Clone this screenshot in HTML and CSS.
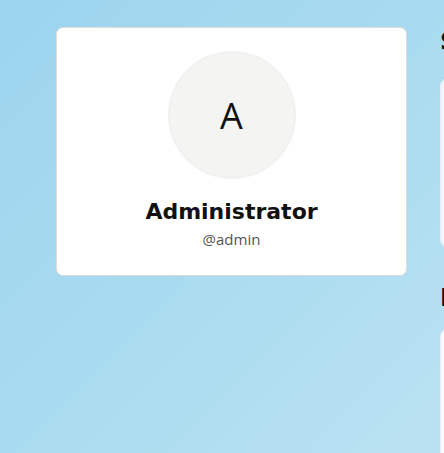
FILE: index.html
```html
<!DOCTYPE html>
<html lang="en">
<head>
<meta charset="utf-8">
<title>Profile</title>
<link rel="stylesheet" href="styles.css">
</head>
<body>
<div class="page">
  <section class="profile">
    <div class="avatar"><span>A</span></div>
    <h1 class="name">Administrator</h1>
    <div class="handle">@admin</div>
  </section>
  <aside class="side">
    <h2 class="side-title">Statistics</h2>
    <div class="side-card stats"></div>
    <h2 class="side-title second">Informations</h2>
    <div class="side-card info"></div>
  </aside>
</div>
</body>
</html>
```

FILE: styles.css
```css
html, body {
  margin: 0;
  height: 100%;
}
body {
  background: linear-gradient(135deg, #9cd4ee 0%, #a9dbf0 50%, #bbe2f2 100%);
  font-family: "Open Sans", "Liberation Sans", sans-serif;
  overflow: hidden;
}
.page {
  display: flex;
  align-items: flex-start;
  gap: 33px;
  padding: 27px 0 0 56px;
}
.profile {
  flex: 0 0 351px;
  box-sizing: border-box;
  height: 249px;
  background: #ffffff;
  border: 1px solid #dcdcdc;
  border-radius: 7px;
  display: flex;
  flex-direction: column;
  align-items: center;
  padding-top: 23px;
}
.avatar {
  width: 128px;
  height: 128px;
  box-sizing: border-box;
  border-radius: 50%;
  background: #f4f4f3;
  border: 3px solid #f2f2f1;
  box-shadow: inset 0 0 0 1px #f7f7f6;
  display: flex;
  align-items: center;
  justify-content: center;
}
.avatar span {
  font-size: 36px;
  line-height: 1;
  color: #111;
  margin-top: 2px;
}
.name {
  margin: 20px 0 0;
  font-family: "DejaVu Sans", "Liberation Sans", sans-serif;
  font-weight: 700;
  font-size: 22px;
  line-height: 26px;
  color: #111;
}
.handle {
  margin-top: 4px;
  font-size: 15px;
  line-height: 20px;
  color: #555;
}
.side {
  flex: 0 0 300px;
  display: flex;
  flex-direction: column;
}
.side-title {
  margin: 0;
  font-family: "DejaVu Sans", "Liberation Sans", sans-serif;
  font-weight: 700;
  font-size: 24px;
  line-height: 30px;
  color: #111;
}
.side-card {
  margin-top: 21px;
  border-radius: 8px;
  border: 1px solid #e3eef6;
}
.stats {
  height: 168px;
  background: #eef6fc;
}
.second {
  margin-top: 35px;
}
.second + .side-card {
  margin-top: 15px;
}
.info {
  height: 200px;
  background: #f7fafc;
}
```
